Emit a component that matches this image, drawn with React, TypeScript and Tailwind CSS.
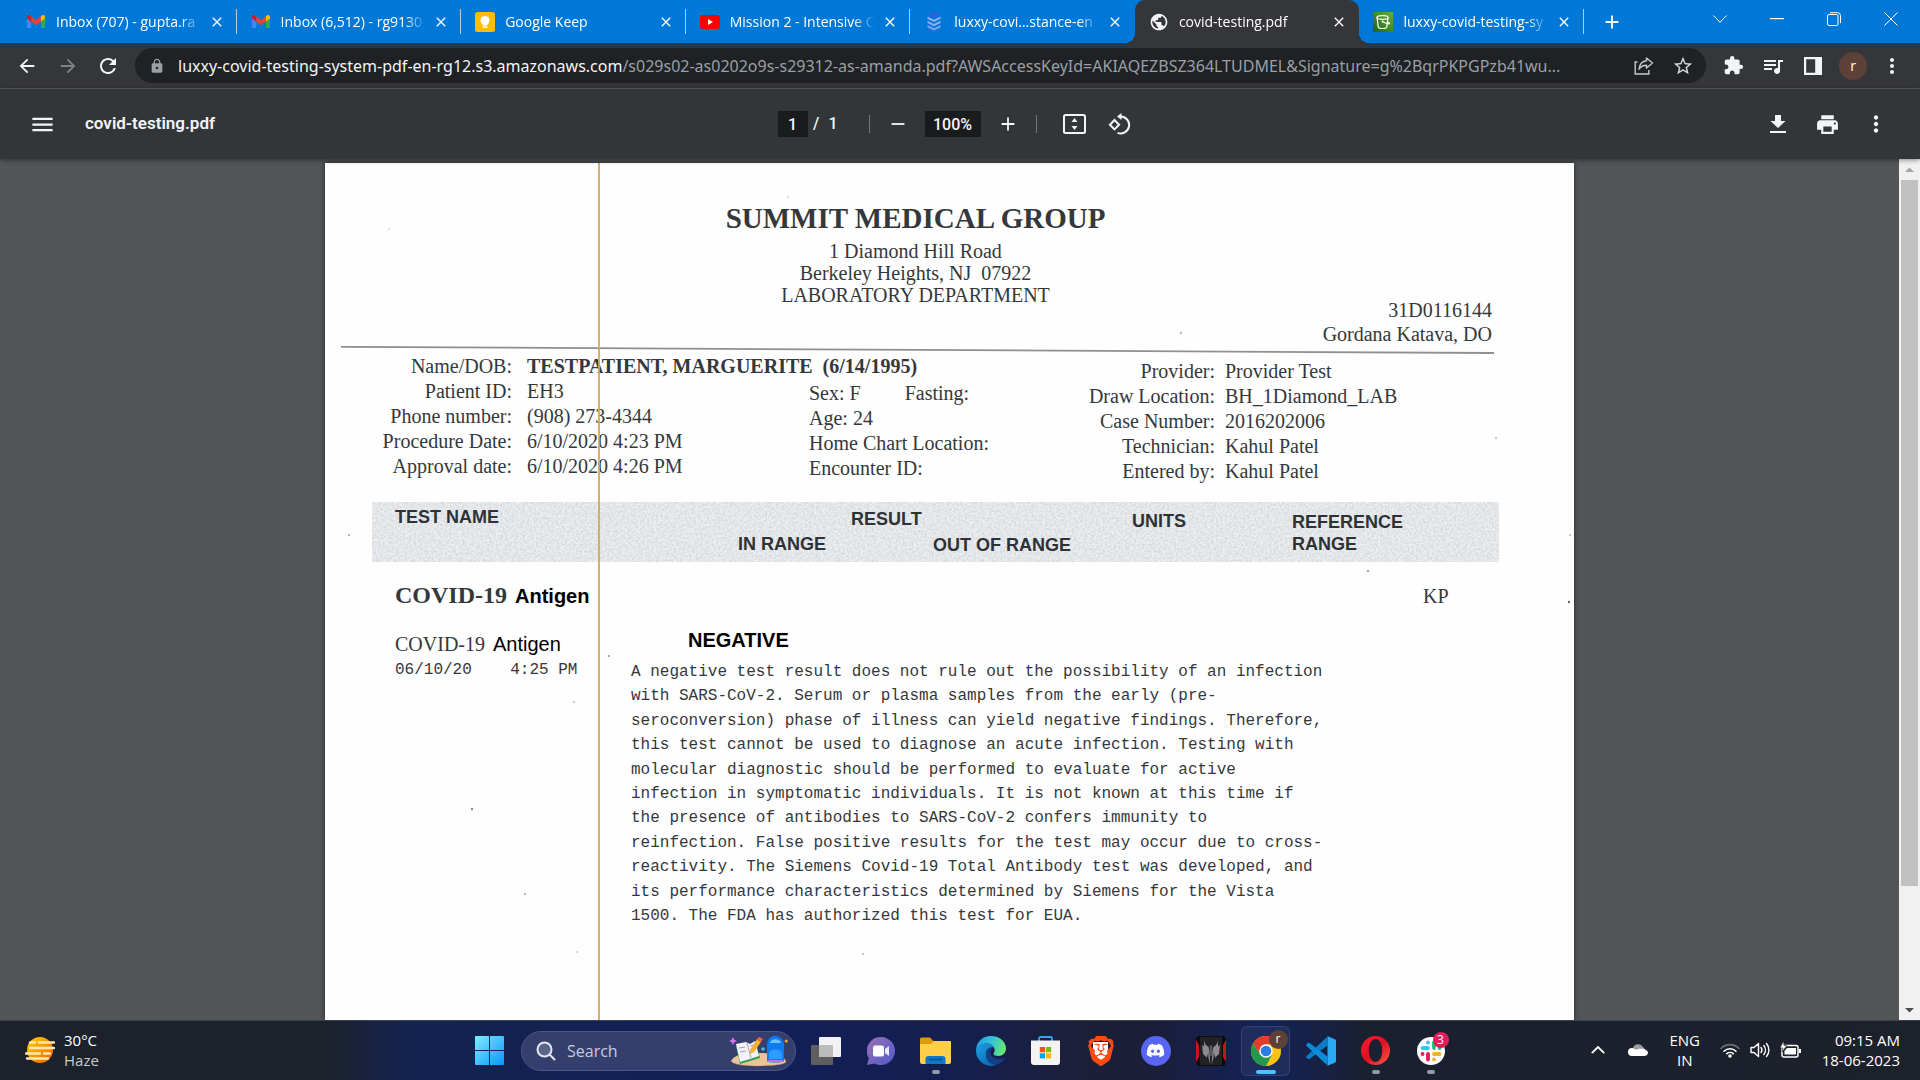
import React from "react";
import {
  MdAdd,
  MdArrowBack,
  MdArrowForward,
  MdClose,
  MdExtension,
  MdLock,
  MdMenu,
  MdMoreVert,
  MdPrint,
  MdPublic,
  MdQueueMusic,
  MdRefresh,
  MdRemove,
  MdStarBorder,
} from "react-icons/md";
import { FaDiscord } from "react-icons/fa";
import { SiBrave } from "react-icons/si";

/* ---------- favicons ---------- */

function GmailIcon() {
  return (
    <svg viewBox="0 0 24 18" className="w-[18px] shrink-0" aria-hidden="true">
      <path d="M0 3v13.4C0 17.300.7 18 1.600 18H5.500V7.500z" fill="#4285f4" />
      <path d="M18.500 7.500V18h3.900c.9 0 1.600-.7 1.600-1.600V3z" fill="#34a853" />
      <path d="M5.500 1.700v6.900L12 13.500l6.500-4.900V1.700L12 6.600z" fill="#ea4335" />
      <path d="M0 2.500v2L5.500 8.600V1.700L4 .5C2.300-.8 0 .4 0 2.500z" fill="#c5221f" />
      <path d="M24 2.500v2l-5.500 4.100V1.700L20 .5c1.700-1.300 4-.1 4 2z" fill="#fbbc04" />
    </svg>
  );
}

function KeepIcon() {
  return (
    <svg viewBox="0 0 20 20" className="size-5 shrink-0" aria-hidden="true">
      <rect width="20" height="20" rx="2.500" fill="#fbbc04" />
      <circle cx="10" cy="8.500" r="4.500" fill="#fff" />
      <rect x="7.500" y="11" width="5" height="2.500" fill="#fff" />
      <rect x="7.500" y="14.200" width="5" height="1.600" rx=".6" fill="#fff" />
    </svg>
  );
}

function YoutubeIcon() {
  return (
    <svg viewBox="0 0 20 14" className="w-5 shrink-0" aria-hidden="true">
      <rect width="20" height="14" rx="3" fill="#f00" />
      <path d="M8 4v6l5-3z" fill="#fff" />
    </svg>
  );
}

function StackIcon() {
  return (
    <svg viewBox="0 0 20 20" className="size-5 shrink-0" aria-hidden="true">
      <path d="M10 0l6.500 3.300L10 6.600 3.500 3.300z" fill="#2f62dc" />
      <path d="M3.500 4.500L10 7.800l6.500-3.300v2.300L10 10.100 3.500 6.800z" fill="#8fb0f5" />
      <path d="M3.500 8.700L10 12l6.500-3.300V11L10 14.300 3.500 11z" fill="#8fb0f5" />
      <path d="M3.500 12.900L10 16.200l6.500-3.300v2.300L10 18.500l-6.500-3.300z" fill="#7ea3f3" />
      <path d="M3.500 16.500L10 19.800l6.500-3.300v.6L10 20.400l-6.500-3.300z" fill="#3f70e0" />
    </svg>
  );
}

function BucketIcon() {
  return (
    <svg viewBox="0 0 20 20" className="size-5 shrink-0" aria-hidden="true">
      <defs>
        <linearGradient id="bucket" x1="0" y1="1" x2="1" y2="0">
          <stop offset="0" stopColor="#1b660f" />
          <stop offset="1" stopColor="#6cae3e" />
        </linearGradient>
      </defs>
      <rect width="20" height="20" fill="url(#bucket)" />
      <g fill="none" stroke="#fff" strokeWidth="1.200">
        <ellipse cx="9.500" cy="5.500" rx="5.500" ry="1.800" />
        <path d="M4 5.500l1.300 9.700c.8 1.700 7.600 1.700 8.400 0L15 5.500M9.500 9.500c3 1.800 6.800 3 7 1.800.1-.7-1-1.200-2-1.600" />
      </g>
      <circle cx="9.500" cy="9.500" r="1" fill="#fff" />
    </svg>
  );
}

const tabs = [
  { title: "Inbox (707) - gupta.ra", icon: <GmailIcon /> },
  { title: "Inbox (6,512) - rg9130", icon: <GmailIcon /> },
  { title: "Google Keep", icon: <KeepIcon /> },
  { title: "Mission 2 - Intensive C", icon: <YoutubeIcon /> },
  { title: "luxxy-covi...stance-en", icon: <StackIcon /> },
  {
    title: "covid-testing.pdf",
    icon: <MdPublic className="size-5 shrink-0 text-gray-100" />,
    active: true,
  },
  { title: "luxxy-covid-testing-sy", icon: <BucketIcon /> },
];

function TabStrip() {
  return (
    <header className="flex h-[43px] shrink-0 items-stretch bg-[#0078d7] pl-3 text-white">
      <div className="flex w-[1572px] min-w-0">
        {tabs.map((tab, i) => (
          <div
            key={tab.title}
            className={
              tab.active
                ? "relative flex min-w-0 flex-1 items-center rounded-t-[10px] bg-[#35363a] pl-[14px] pr-[9px]"
                : "relative flex min-w-0 flex-1 items-center pl-[14px] pr-[9px]"
            }
          >
            {tab.active && (
              <>
                <span className="absolute -left-2.5 bottom-0 size-2.5 bg-[radial-gradient(circle_at_top_left,transparent_10px,#35363a_10px)]" />
                <span className="absolute -right-2.5 bottom-0 size-2.5 bg-[radial-gradient(circle_at_top_right,transparent_10px,#35363a_10px)]" />
              </>
            )}
            <span className="flex w-5 justify-center">{tab.icon}</span>
            <span className="ml-[10px] min-w-0 flex-1 overflow-hidden whitespace-nowrap text-sm mask-r-from-85%">
              {tab.title}
            </span>
            <button aria-label={"Close " + tab.title} className="ml-1 flex size-[22px] items-center justify-center">
              <MdClose className="size-4" />
            </button>
            {i !== 4 && !tab.active && (
              <span className="absolute right-0 top-[9px] h-[25px] w-px bg-[#a5cff2]" />
            )}
          </div>
        ))}
      </div>
      <button aria-label="New tab" className="ml-4 flex w-6 items-center justify-center">
        <MdAdd className="size-[22px]" />
      </button>
      <div className="ml-auto flex h-[37px]">
        <button aria-label="Search tabs" className="flex w-14 items-center justify-center">
          <svg viewBox="0 0 14 8" className="w-[14px]" fill="none" stroke="currentColor">
            <path d="M.5 .5L7 7.300 13.500.5" />
          </svg>
        </button>
        <button aria-label="Minimize" className="flex w-[57px] items-center justify-center">
          <svg viewBox="0 0 14 2" className="w-[14px]" fill="currentColor">
            <rect width="14" height="1.200" />
          </svg>
        </button>
        <button aria-label="Restore" className="flex w-[57px] items-center justify-center">
          <svg viewBox="0 0 14 14" className="w-[14px]" fill="none" stroke="currentColor">
            <rect x=".5" y="2.500" width="10.500" height="11" rx="1.500" />
            <path d="M3 .7h7.500a3 3 0 0 1 3 3V11" />
          </svg>
        </button>
        <button aria-label="Close window" className="flex w-[58px] items-center justify-center">
          <svg viewBox="0 0 14 14" className="w-[14px]" fill="none" stroke="currentColor">
            <path d="M.5 .5l13 13M13.500.5l-13 13" />
          </svg>
        </button>
      </div>
    </header>
  );
}

function AddressBar() {
  return (
    <nav className="flex h-[46px] shrink-0 items-center border-b border-[#5f6064] bg-[#35363a] pl-[7px] pr-[9px] text-gray-100">
      <button aria-label="Back" className="flex w-10 justify-center">
        <MdArrowBack className="size-[22px]" />
      </button>
      <button aria-label="Forward" className="flex w-[41px] justify-center text-[#808185]">
        <MdArrowForward className="size-[22px]" />
      </button>
      <button aria-label="Reload" className="flex w-10 justify-center">
        <MdRefresh className="size-6" />
      </button>
      <div className="ml-[7px] flex h-[35px] min-w-0 flex-1 items-center rounded-full bg-[#202124] pl-[14px] pr-3">
        <MdLock className="size-4 shrink-0 text-[#9aa0a6]" />
        <a
          href="#covid-testing"
          className="ml-[13px] min-w-0 flex-1 overflow-hidden whitespace-nowrap font-['Noto_Sans',sans-serif] text-base text-[#9aa0a6]"
        >
          <span className="text-gray-100">luxxy-covid-testing-system-pdf-en-rg12.s3.amazonaws.com</span>
          /s029s02-as0202o9s-s29312-as-amanda.pdf?AWSAccessKeyId=AKIAQEZBSZ364LTUDMEL&amp;Signature=g%2BqrPKPGPzb41wu...
        </a>
        <button aria-label="Share" className="flex w-9 justify-center text-[#c6c8cb]">
          <svg viewBox="0 0 20 20" className="size-5" fill="none" stroke="currentColor" strokeWidth="1.400">
            <path d="M3.500 6H1.200v12h13.600v-4" />
            <path d="M12.500 2l6 5-6 5V9.200c-3.500 0-5.500 1-7.500 4C5.500 8.500 8 5.300 12.500 4.800z" strokeLinejoin="round" />
          </svg>
        </button>
        <button aria-label="Bookmark this page" className="flex w-8 justify-end text-[#d5d7da]">
          <MdStarBorder className="size-[22px]" />
        </button>
      </div>
      <button aria-label="Extensions" className="ml-[7px] flex w-10 justify-center">
        <MdExtension className="size-[21px]" />
      </button>
      <button aria-label="Media controls" className="flex w-10 justify-center">
        <MdQueueMusic className="size-6" />
      </button>
      <button aria-label="Side panel" className="flex w-10 justify-center">
        <svg viewBox="0 0 18 18" className="size-[18px]" fill="currentColor">
          <path fillRule="evenodd" d="M0 0h18v18H0zM2.200 2.200v13.600h9V2.200z" />
        </svg>
      </button>
      <button aria-label="Profile" className="flex w-10 justify-center">
        <span className="flex size-7 items-center justify-center rounded-full bg-[#5d4037] text-sm text-white">r</span>
      </button>
      <button aria-label="Chrome menu" className="flex w-[38px] justify-center">
        <MdMoreVert className="size-6" />
      </button>
    </nav>
  );
}

function PdfToolbar() {
  return (
    <div className="relative z-10 grid h-[70px] shrink-0 grid-cols-[1fr_auto_1fr] items-center bg-[#323639] font-['Roboto',sans-serif] text-base text-gray-100 shadow-[0_1px_5px_rgba(0,0,0,0.45)]">
      <div className="flex items-center pl-[29px]">
        <button aria-label="Toggle sidebar">
          <MdMenu className="size-[27px]" />
        </button>
        <h1 className="ml-[29px] text-[17px] font-semibold">covid-testing.pdf</h1>
      </div>
      <div className="flex items-center font-medium">
        <input
          aria-label="Page number"
          defaultValue="1"
          className="h-[26px] w-[30px] bg-[#191b1c] text-center"
        />
        <span className="ml-1 w-[9px] text-center">/</span>
        <span className="ml-2 w-2.5">1</span>
        <span className="ml-[30px] h-[18px] w-px bg-[#74777a]" />
        <button aria-label="Zoom out" className="ml-[17px]">
          <MdRemove className="size-[22px]" />
        </button>
        <input
          aria-label="Zoom level"
          defaultValue="100%"
          className="ml-4 h-[26px] w-14 bg-[#191b1c] text-center"
        />
        <button aria-label="Zoom in" className="ml-4">
          <MdAdd className="size-[22px]" />
        </button>
        <span className="ml-[17px] h-[18px] w-px bg-[#74777a]" />
        <button aria-label="Fit to page" className="ml-[26px]">
          <svg viewBox="0 0 23 20" className="w-[23px]" fill="none">
            <rect x="1" y="1" width="21" height="18" rx="1.500" stroke="currentColor" strokeWidth="2" />
            <path d="M11.500 4l3 4h-6zM11.500 16l3-4h-6z" fill="currentColor" />
          </svg>
        </button>
        <button aria-label="Rotate counterclockwise" className="ml-[22px] mr-3">
          <svg viewBox="0 0 23 22" className="w-[23px]" fill="none" stroke="currentColor" strokeWidth="2">
            <path d="M6.500 7l4.600 4.700-4.600 4.700-4.600-4.700z" />
            <path d="M12.500 3.500a8.500 8.500 0 1 1-3 16.400" />
            <path d="M13.500 0v7L9 3.500z" fill="currentColor" stroke="none" />
          </svg>
        </button>
      </div>
      <div className="flex items-center justify-end pr-8">
        <button aria-label="Download" className="flex w-12 justify-center">
          <svg viewBox="0 0 16 18" className="h-[18px] w-4" fill="currentColor">
            <path d="M5 0h6v6h4.500L8 13 .5 6H5zM0 16h16v2H0z" />
          </svg>
        </button>
        <button aria-label="Print" className="flex w-[50px] justify-center">
          <MdPrint className="size-[25px]" />
        </button>
        <button aria-label="More actions" className="-mr-3 flex w-12 justify-center">
          <MdMoreVert className="size-[26px]" />
        </button>
      </div>
    </div>
  );
}

/* ---------- scanned lab report ---------- */

const patient = [
  ["Name/DOB:", "TESTPATIENT, MARGUERITE\u00a0 (6/14/1995)"],
  ["Patient ID:", "EH3"],
  ["Phone number:", "(908) 273-4344"],
  ["Procedure Date:", "6/10/2020 4:23 PM"],
  ["Approval date:", "6/10/2020 4:26 PM"],
];

const order = [
  ["Provider:", "Provider Test"],
  ["Draw Location:", "BH_1Diamond_LAB"],
  ["Case Number:", "2016202006"],
  ["Technician:", "Kahul Patel"],
  ["Entered by:", "Kahul Patel"],
];

const note = [
  "A negative test result does not rule out the possibility of an infection",
  "with SARS-CoV-2. Serum or plasma samples from the early (pre-",
  "seroconversion) phase of illness can yield negative findings. Therefore,",
  "this test cannot be used to diagnose an acute infection. Testing with",
  "molecular diagnostic should be performed to evaluate for active",
  "infection in symptomatic individuals. It is not known at this time if",
  "the presence of antibodies to SARS-CoV-2 confers immunity to",
  "reinfection. False positive results for the test may occur due to cross-",
  "reactivity. The Siemens Covid-19 Total Antibody test was developed, and",
  "its performance characteristics determined by Siemens for the Vista",
  "1500. The FDA has authorized this test for EUA.",
];

const specks = [
  [64, 66, 0.15], [463, 34, 0.2], [856, 170, 0.4], [1171, 275, 0.3], [1245, 372, 0.3],
  [1043, 408, 0.5], [1244, 439, 0.9], [24, 372, 0.4], [147, 646, 0.7], [249, 539, 0.3],
  [200, 731, 0.4], [252, 789, 0.2], [538, 791, 0.3], [284, 493, 0.5],
];

function Report() {
  return (
    <article className="relative mt-1 w-full max-w-[1249px] flex-1 overflow-hidden bg-[#fefefe] pt-[39px] font-['Liberation_Serif','Times_New_Roman',serif] text-xl text-[#35383b] shadow-[0_0_5px_rgba(0,0,0,0.6)]">
      <svg className="absolute inset-0 size-full" aria-hidden="true">
        {specks.map(([x, y, o]) => (
          <circle key={x} cx={x} cy={y} r="1.200" fill="#555" opacity={o} />
        ))}
      </svg>
      <header className="flex flex-col items-center pr-[68px] text-center leading-[22px]">
        <h2 className="mb-1.5 text-[29px] leading-8 font-bold">SUMMIT MEDICAL GROUP</h2>
        <p>1 Diamond Hill Road</p>
        <p>Berkeley Heights, NJ&nbsp; 07922</p>
        <p>LABORATORY DEPARTMENT</p>
      </header>
      <div className="-mt-2 pr-[82px] text-right leading-6">
        <p>31D0116144</p>
        <p>Gordana Katava, DO</p>
      </div>
      <div className="pr-20 pl-4">
        <svg viewBox="0 0 1152 8" preserveAspectRatio="none" className="block h-2 w-full" aria-hidden="true">
          <path d="M0 .8L1152 7" stroke="#8d9194" strokeWidth="1.800" />
        </svg>
      </div>
      <div className="flex leading-[25px]">
        <dl className="w-[484px]">
          {patient.map(([label, value], i) => (
            <div key={label} className="flex whitespace-nowrap">
              <dt className="w-[187px] shrink-0 text-right">{label}</dt>
              <dd className={i === 0 ? "ml-[15px] font-bold" : "ml-[15px]"}>{value}</dd>
            </div>
          ))}
        </dl>
        <div className="w-[249px] pt-[27px]">
          <p className="flex gap-11">
            <span>Sex: F</span>
            <span>Fasting:</span>
          </p>
          <p>Age: 24</p>
          <p>Home Chart Location:</p>
          <p>Encounter ID:</p>
        </div>
        <dl className="pt-[5px]">
          {order.map(([label, value]) => (
            <div key={label} className="flex whitespace-nowrap">
              <dt className="w-[157px] shrink-0 text-right">{label}</dt>
              <dd className="ml-[10px]">{value}</dd>
            </div>
          ))}
        </dl>
      </div>

      <div className="relative mt-[18px] ml-[47px] w-[1127px]">
        <svg className="absolute inset-x-0 top-0 h-[60px] w-full" aria-hidden="true">
          <filter id="grain">
            <feTurbulence type="fractalNoise" baseFrequency="0.450" numOctaves="2" seed="4" />
            <feColorMatrix values="0 0 0 0 0.450  0 0 0 0 0.490  0 0 0 0 0.530  0.900 0 0 0 -0.300" />
          </filter>
          <rect width="100%" height="100%" fill="#eceef0" />
          <rect width="100%" height="100%" filter="url(#grain)" />
        </svg>
        <table className="relative w-full table-fixed text-left align-top">
          <colgroup>
            <col className="w-[259px]" />
            <col className="w-[294px]" />
            <col className="w-[200px]" />
            <col className="w-[159px]" />
            <col className="w-[215px]" />
          </colgroup>
          <thead className="align-top font-['Liberation_Sans',Arial,sans-serif] text-lg leading-[22px] text-[#2f3235]">
            <tr className="h-7">
              <th rowSpan={2} className="pt-1 pl-[23px]">TEST NAME</th>
              <th colSpan={2} className="pt-1.5 pl-[220px]">RESULT</th>
              <th rowSpan={2} className="pt-2 pl-[7px]">UNITS</th>
              <th rowSpan={2} className="pt-[9px] pl-2">
                REFERENCE
                <br />
                RANGE
              </th>
            </tr>
            <tr className="h-8">
              <th className="pt-[3px] pl-[107px]">IN RANGE</th>
              <th className="pt-1 pl-2">OUT OF RANGE</th>
            </tr>
          </thead>
          <tbody className="align-top">
            <tr>
              <td colSpan={4} className="pt-[19px] pl-[23px] leading-7">
                <span className="text-2xl leading-7 font-bold">COVID-19</span>
                <span className="ml-2 font-['Liberation_Sans',Arial,sans-serif] font-bold text-black">Antigen</span>
              </td>
              <td className="pt-5 pl-[139px] leading-7">KP</td>
            </tr>
            <tr>
              <td className="pt-5 pl-[23px] leading-7">
                COVID-19
                <span className="ml-2 font-['Liberation_Sans',Arial,sans-serif] text-black">Antigen</span>
                <p className="font-['Liberation_Mono','Courier_New',monospace] text-base leading-6 whitespace-pre">
                  {"06/10/20    4:25 PM"}
                </p>
              </td>
              <td colSpan={4} className="pt-[18px]">
                <p className="pl-[57px] font-['Liberation_Sans',Arial,sans-serif] leading-6 font-bold text-black">
                  NEGATIVE
                </p>
                <p className="mt-2 flex h-[268px] flex-col justify-between font-['Liberation_Mono','Courier_New',monospace] text-base leading-6 whitespace-nowrap">
                  {note.map((line) => (
                    <span key={line}>{line}</span>
                  ))}
                </p>
              </td>
            </tr>
          </tbody>
        </table>
      </div>
      <div className="absolute inset-y-0 left-[273px] w-0.5 bg-[#cda95c] opacity-90" />
    </article>
  );
}

function Viewer() {
  return (
    <main className="flex min-h-0 flex-1 bg-[#525659]">
      <div className="flex min-w-0 flex-1 flex-col items-center overflow-hidden">
        <Report />
      </div>
      <div className="flex w-[21px] flex-col items-center bg-[#f1f1f1]" aria-hidden="true">
        <svg viewBox="0 0 21 21" className="size-[21px]">
          <path d="M6 13l4.500-4.500L15 13z" fill="#a3a3a3" />
        </svg>
        <div className="h-[706px] w-[17px] bg-[#c1c1c1]" />
        <svg viewBox="0 0 21 21" className="mt-auto size-[21px]">
          <path d="M6 9l4.500 4.500L15 9z" fill="#505050" />
        </svg>
      </div>
    </main>
  );
}

/* ---------- taskbar ---------- */

function HazeIcon() {
  return (
    <svg viewBox="0 0 30 28" className="w-[30px]" aria-hidden="true">
      <defs>
        <linearGradient id="sun" x1="0" y1="0" x2="1" y2="1">
          <stop offset="0" stopColor="#ffd000" />
          <stop offset="1" stopColor="#f06000" />
        </linearGradient>
      </defs>
      <ellipse cx="15" cy="14" rx="13" ry="13" fill="url(#sun)" />
      <g stroke="#ffe9b0" strokeWidth="2.400" strokeLinecap="round">
        <path d="M5 6.500h5M14 6.500h15M5 12h24M1 17.500h14M19 17.500h6M2 22.500h21" />
      </g>
    </svg>
  );
}

function WindowsIcon() {
  return (
    <svg viewBox="0 0 29 29" className="size-[29px]" aria-hidden="true">
      <defs>
        <linearGradient id="win" x1="0" y1="0" x2="1" y2="1">
          <stop offset="0" stopColor="#7eecfb" />
          <stop offset="1" stopColor="#0a95ff" />
        </linearGradient>
      </defs>
      <path
        d="M1 0h13v14H0V1a1 1 0 0 1 1-1zM15 0h13a1 1 0 0 1 1 1v13H15zM0 15h14v14H1a1 1 0 0 1-1-1zM15 15h14v13a1 1 0 0 1-1 1H15z"
        fill="url(#win)"
      />
    </svg>
  );
}

function SchoolArt() {
  return (
    <svg viewBox="0 0 58 32" className="h-8 w-[58px]" aria-hidden="true">
      <path d="M1 26c3-6 12-8 28-8s26 3 27 9c-2 5-52 6-55-1z" fill="#e9c596" />
      <path d="M1 27c4 5 50 5 55 0-2 5-52 6-55 0z" fill="#b98a55" />
      <path d="M6 11l11-3 4 1 5-2 4 16-10 3-10 3z" fill="#2e9b57" />
      <path d="M6 9l10-2 4 2 5-3 4 15-9 3-10 3z" fill="#f4f1f8" />
      <path d="M17 8l4 15M9 13l6-1M10 17l6-1M20 11l4-1" stroke="#a6a0b8" strokeWidth="1" />
      <path d="M20 15l7-11 4 3-7 10-4 2z" fill="#f7b02c" />
      <path d="M27 4l2-2 4 2-2 3z" fill="#f2604c" />
      <path d="M42 2c1-2 5-2 6 0z" fill="#0b62d6" />
      <path d="M37 26V10c0-6 4-9 8-9s9 3 9 9v16c0 2-17 2-17 0z" fill="#0f7bf0" />
      <path d="M40 8c1-5 10-5 11 0z" fill="#6cc4ff" />
      <path d="M39 24v-5c0-6 13-6 13 0v5z" fill="#2d9bff" />
      <path d="M38 25h15v2H38z" fill="#c86cf0" />
      <path d="M3 2l1.300 2.700L7 6 4.300 7.300 3 10 1.700 7.300-1 6l2.700-1.300z" fill="#d472f5" />
      <circle cx="33" cy="14" r="1.800" fill="#3fc4e8" />
      <circle cx="56.200" cy="6" r="1.600" fill="#f5a81c" />
    </svg>
  );
}

function TaskViewIcon() {
  return (
    <svg viewBox="0 0 30 28" className="w-[30px]" aria-hidden="true">
      <rect x="0" y="8" width="22" height="20" rx="1" fill="#5e5e60" />
      <rect x="8" y="0" width="22" height="20" rx="1" fill="#f2f2f2" />
      <rect x="8" y="8" width="14" height="12" fill="#bcbcbd" />
    </svg>
  );
}

function ChatIcon() {
  return (
    <svg viewBox="0 0 28 28" className="size-7" aria-hidden="true">
      <defs>
        <linearGradient id="chat" x1="0" y1="0" x2="1" y2="1">
          <stop offset="0" stopColor="#9a6fb8" />
          <stop offset="1" stopColor="#4f5bc8" />
        </linearGradient>
      </defs>
      <path d="M14 0a14 14 0 1 1-6.500 26.400L0 28l1.800-6.800A14 14 0 0 1 14 0z" fill="url(#chat)" />
      <rect x="6" y="8.500" width="11" height="11" rx="2" fill="#fff" />
      <path d="M18 12l4-3v10l-4-3z" fill="#e6e8ff" />
    </svg>
  );
}

function FolderIcon() {
  return (
    <svg viewBox="0 0 31 27" className="w-[31px]" aria-hidden="true">
      <path d="M0 2a1.500 1.500 0 0 1 1.500-1.500H10l3.500 3.500H29a2 2 0 0 1 2 2v6H0z" fill="#dd9a0c" />
      <path d="M0 7h11l3-3h16a1 1 0 0 1 1 1v20a2 2 0 0 1-2 2H2a2 2 0 0 1-2-2z" fill="#ffcf48" />
      <path d="M5.500 27v-5a3 3 0 0 1 3-3h14a3 3 0 0 1 3 3v5z" fill="#0f78c8" />
      <path d="M9 22.500h13" stroke="#0a4f92" strokeWidth="1.500" />
    </svg>
  );
}

function EdgeIcon() {
  return (
    <svg viewBox="0 0 30 30" className="size-[30px]" aria-hidden="true">
      <defs>
        <linearGradient id="edgeTop" x1="0" y1="0.300" x2="1" y2="0.500">
          <stop offset="0" stopColor="#1f9de8" />
          <stop offset="0.500" stopColor="#35c1d8" />
          <stop offset="1" stopColor="#66eb6e" />
        </linearGradient>
        <linearGradient id="edgeBody" x1="0" y1="0" x2="1" y2="1">
          <stop offset="0" stopColor="#1aa3e8" />
          <stop offset="1" stopColor="#0c59a4" />
        </linearGradient>
      </defs>
      <path d="M0 15C0 6 6.500 0 15 0c9 0 15 6 15 12.500 0 4.500-3.500 7.500-7.500 7.500-3 0-5-1-5-2.300 0-1 1.200-1.500 1.200-3.700C18.700 10.500 15 7.500 10.500 7.500 5 7.500 1.500 11 0 15z" fill="url(#edgeTop)" />
      <path d="M0 15c1-4 5-7.500 10.500-7.500 3.500 0 6.500 2 7.500 4.500-3-1.500-8 .5-8 6 0 6 5 12 12 10.200A15 15 0 0 1 0 15z" fill="url(#edgeBody)" />
      <path d="M18 12c-4-1.500-8 2-8 6.500 0 6 5.500 11.500 12.500 9.500 3-1.300 5-3.500 6-5.500.3-.7-.3-.8-.8-.5-5.500 2.800-14-.5-13.200-6.500.2-1.500 1.500-3 3.500-3.500z" fill="#123f86" />
    </svg>
  );
}

function StoreIcon() {
  return (
    <svg viewBox="0 0 29 29" className="size-[29px]" aria-hidden="true">
      <path d="M8 6V2.500A1.500 1.500 0 0 1 9.500 1h10A1.500 1.500 0 0 1 21 2.500V6" fill="none" stroke="#2aa9ec" strokeWidth="1.800" />
      <path d="M0 4.500h29V26a3 3 0 0 1-3 3H3a3 3 0 0 1-3-3z" fill="#f3f3f3" />
      <rect x="8.800" y="11" width="5.200" height="5.200" fill="#f25022" />
      <rect x="15" y="11" width="5.200" height="5.200" fill="#7fba00" />
      <rect x="8.800" y="17.200" width="5.200" height="5.200" fill="#00a4ef" />
      <rect x="15" y="17.200" width="5.200" height="5.200" fill="#ffb900" />
    </svg>
  );
}

function BraveIcon() {
  return (
    <span className="relative flex size-[30px] items-center justify-center">
      <span className="absolute h-[18px] w-[15px] rounded-b-full bg-white" />
      <SiBrave className="relative size-[30px] text-[#fb4a12]" />
    </span>
  );
}

function DiscordIcon() {
  return (
    <span className="flex size-[30px] items-center justify-center rounded-full bg-[#5865f2]">
      <FaDiscord className="size-[19px] text-white" />
    </span>
  );
}

function PredatorIcon() {
  return (
    <svg viewBox="0 0 30 30" className="size-[30px]" aria-hidden="true">
      <path d="M2 0h26l2 3v24l-2 3H2l-2-3V3z" fill="#0c0c0e" />
      <path d="M0 4l3 5v12l-3 5zM30 4l-3 5v12l3 5z" fill="#c8141c" />
      <path d="M4 1h22v28H4z" fill="#222225" />
      <path d="M8 3c0 4 1.500 6 4.500 8l1 4 .8 13-1.800-6-.3-5-1.400 4.500L7 18 6 9l2 1.500z" fill="#8b8c91" />
      <path d="M22 3c0 4-1.500 6-4.500 8l-1 4-.8 13 1.800-6 .3-5 1.400 4.500L23 18l1-9-2 1.500z" fill="#8b8c91" />
      <path d="M13.500 9.500h3L15.800 20h-1.600z" fill="#5b5c61" />
    </svg>
  );
}

function ChromeIcon() {
  return (
    <span className="relative">
      <svg viewBox="0 0 30 30" className="size-[30px]" aria-hidden="true">
        <circle cx="15" cy="15" r="15" fill="#fbc116" />
        <path d="M15 8.300h13.400A15 15 0 0 0 2 7.500l7 11z" fill="#e33b2e" />
        <path d="M2 7.500A15 15 0 0 0 15 30l6-11.500-12 0z" fill="#229a4b" />
        <circle cx="15" cy="15" r="6.800" fill="#fff" />
        <circle cx="15" cy="15" r="5.300" fill="#2a7de8" />
      </svg>
      <span className="absolute -top-[6px] -right-[7px] flex size-[19px] items-center justify-center rounded-full bg-[#5d4037] text-xs text-white">
        r
      </span>
    </span>
  );
}

function CodeIcon() {
  return (
    <svg viewBox="0 0 30 30" className="size-[30px]" aria-hidden="true">
      <path d="M21.500 9.500L3.500 23c-.5.400-1 .4-1.500 0L.6 21.700c-.6-.5-.6-1.300 0-1.800L21 1z" fill="#0a7dc6" />
      <path d="M21.500 20.500L3.500 7c-.5-.4-1-.4-1.500 0L.6 8.300c-.6.500-.6 1.300 0 1.800L21 29z" fill="#0a8bdc" />
      <path d="M21 0l7.800 3.200c.7.300 1.200 1 1.200 1.800v20c0 .8-.5 1.500-1.200 1.800L21 30c.4-.3.500-.8.500-1.300V1.300c0-.5-.1-1-.5-1.300z" fill="#2aa9f5" />
    </svg>
  );
}

function OperaIcon() {
  return (
    <svg viewBox="0 0 29 29" className="size-[29px]" aria-hidden="true">
      <defs>
        <linearGradient id="opera" x1="0" y1="0" x2="1" y2="1">
          <stop offset="0" stopColor="#ff1b2d" />
          <stop offset="0.500" stopColor="#e01020" />
          <stop offset="1" stopColor="#ff5a4a" />
        </linearGradient>
      </defs>
      <path
        fillRule="evenodd"
        d="M14.500 0a14.500 14.500 0 1 1 0 29 14.500 14.500 0 0 1 0-29zM14.500 3c-4 0-6.700 5-6.700 11.500S10.500 26 14.500 26s6.700-5 6.700-11.500S18.500 3 14.500 3z"
        fill="url(#opera)"
      />
    </svg>
  );
}

function SlackIcon() {
  return (
    <span className="relative flex">
      <svg viewBox="0 0 28 28" className="size-7" aria-hidden="true">
        <circle cx="14" cy="14" r="14" fill="#fff" />
        <g strokeWidth="3.800" strokeLinecap="round">
          <path d="M5.500 11h5.500M11 5.500v.2" stroke="#36c5f0" />
          <path d="M17 5.500V11M22.500 11h.1" stroke="#2eb67d" />
          <path d="M22.500 17H17M17 22.500v.1" stroke="#ecb22e" />
          <path d="M11 22.500V17M5.500 17h.1" stroke="#e01e5a" />
        </g>
      </svg>
      <span className="absolute -top-[5px] -right-1 flex size-4 items-center justify-center rounded-full bg-[#e01e5a] text-xs text-white">
        3
      </span>
    </span>
  );
}

const apps: { name: string; icon: React.ReactNode; mark?: string }[] = [
  { name: "Task View", icon: <TaskViewIcon /> },
  { name: "Chat", icon: <ChatIcon /> },
  { name: "File Explorer", icon: <FolderIcon />, mark: "open" },
  { name: "Microsoft Edge", icon: <EdgeIcon /> },
  { name: "Microsoft Store", icon: <StoreIcon /> },
  { name: "Brave", icon: <BraveIcon /> },
  { name: "Discord", icon: <DiscordIcon /> },
  { name: "PredatorSense", icon: <PredatorIcon /> },
  { name: "Google Chrome", icon: <ChromeIcon />, mark: "active" },
  { name: "Visual Studio Code", icon: <CodeIcon /> },
  { name: "Opera", icon: <OperaIcon />, mark: "open" },
  { name: "Slack", icon: <SlackIcon />, mark: "open" },
];

function Taskbar() {
  return (
    <footer className="grid h-[60px] shrink-0 grid-cols-[1fr_auto_1fr] items-center border-t border-[#3a4150] bg-[linear-gradient(90deg,#1c212a_0%,#1c222c_17%,#142350_21%,#121f58_40%,#141f4e_50%,#1c1f3a_56%,#1b1e38_60%,#12225a_66%,#1a2030_71%,#1c212a_100%)] text-[15px] leading-5 text-white">
      <button className="flex items-center gap-[9px] pb-0.5 pl-[25px] text-left">
        <HazeIcon />
        <span className="flex flex-col">
          <span>30°C</span>
          <span className="text-[#c9ccd2]">Haze</span>
        </span>
      </button>
      <div className="flex items-center">
        <button aria-label="Start" className="flex w-[55px] justify-center">
          <WindowsIcon />
        </button>
        <label className="mr-0.5 ml-1 flex h-10 w-[275px] items-center rounded-full border border-[#4b5686] bg-[#343f6d] pl-[14px] pr-[7px]">
          <svg viewBox="0 0 20 20" className="size-5" fill="none" stroke="#e4e6ee" strokeWidth="2" strokeLinecap="round">
            <circle cx="8.500" cy="8.500" r="7" fill="#5b658c" />
            <path d="M13.800 13.800L18.500 18.500" />
          </svg>
          <input
            aria-label="Search"
            placeholder="Search"
            className="ml-[11px] min-w-0 flex-1 bg-transparent text-base placeholder:text-[#c7cbdc]"
          />
          <SchoolArt />
        </label>
        {apps.map((app) => (
          <button
            key={app.name}
            aria-label={app.name}
            className="relative flex h-[50px] w-[55px] items-center justify-center"
          >
            {app.mark === "active" && (
              <span className="absolute inset-x-[3px] inset-y-0 rounded-md border border-white/10 bg-white/5" />
            )}
            {app.icon}
            {app.mark === "open" && <span className="absolute bottom-0.5 h-1 w-2 rounded-full bg-[#9599a5]" />}
            {app.mark === "active" && <span className="absolute bottom-0.5 h-1 w-5 rounded-full bg-[#4cc2ff]" />}
          </button>
        ))}
      </div>
      <div className="flex items-center justify-end pr-5 pb-0.5">
        <button aria-label="Show hidden icons" className="flex w-10 justify-center">
          <svg viewBox="0 0 14 8" className="w-[14px]" fill="none" stroke="currentColor" strokeWidth="1.800">
            <path d="M.8 7.200L7 1l6.200 6.200" />
          </svg>
        </button>
        <button aria-label="OneDrive" className="flex w-10 justify-center">
          <svg viewBox="0 0 20 13" className="w-5" aria-hidden="true">
            <path d="M5 5a5.500 5.500 0 0 1 10-1l4.500 5H1z" fill="#9a9da3" />
            <path d="M4 13a4 4 0 0 1 0-8c1.500 0 3 1 4 2 3-2 11-1.500 12 2.500 0 2.500-2 3.500-4 3.500z" fill="#fff" />
          </svg>
        </button>
        <button className="flex w-[54px] flex-col text-center">
          <span>ENG</span>
          <span>IN</span>
        </button>
        <button aria-label="Network, volume and battery" className="flex w-[98px] items-center justify-center gap-[10px]">
          <svg viewBox="0 0 20 16" className="w-5" fill="none" stroke="currentColor" strokeWidth="1.600" strokeLinecap="round">
            <path d="M1 6.500a12.500 12.500 0 0 1 18 0" stroke="#6b6f78" />
            <path d="M4 9.200a8.500 8.500 0 0 1 12 0M6.800 11.700a4.700 4.700 0 0 1 6.400 0" />
            <circle cx="10" cy="14" r="1" fill="currentColor" />
          </svg>
          <svg viewBox="0 0 20 16" className="w-5" fill="none" stroke="currentColor" strokeWidth="1.400" strokeLinecap="round" strokeLinejoin="round">
            <path d="M1 5.500h3L8.500 1.500v13L4 10.500H1z" />
            <path d="M11 5.500a4 4 0 0 1 0 5M13.800 3.500a7 7 0 0 1 0 9M16.500 1.500a10 10 0 0 1 0 13" />
          </svg>
          <svg viewBox="0 0 21 17" className="w-[21px]" fill="none" stroke="currentColor" strokeWidth="1.500">
            <rect x="2" y="4.500" width="16" height="11.500" rx="2" />
            <path d="M7 7h9v6.500H4.500V10z" fill="currentColor" stroke="none" />
            <path d="M20 8v4" strokeWidth="2" />
            <path d="M3.500 0L0 7h3l-1 4 5-6.500H4z" fill="currentColor" stroke="#1c212a" strokeWidth=".6" />
          </svg>
        </button>
        <button className="ml-3 flex flex-col text-right whitespace-nowrap">
          <span>09:15 AM</span>
          <span>18-06-2023</span>
        </button>
      </div>
    </footer>
  );
}

export default function App() {
  return (
    <div className="flex h-screen flex-col overflow-hidden font-['Open_Sans','Noto_Sans',sans-serif]">
      <TabStrip />
      <AddressBar />
      <PdfToolbar />
      <Viewer />
      <Taskbar />
    </div>
  );
}
